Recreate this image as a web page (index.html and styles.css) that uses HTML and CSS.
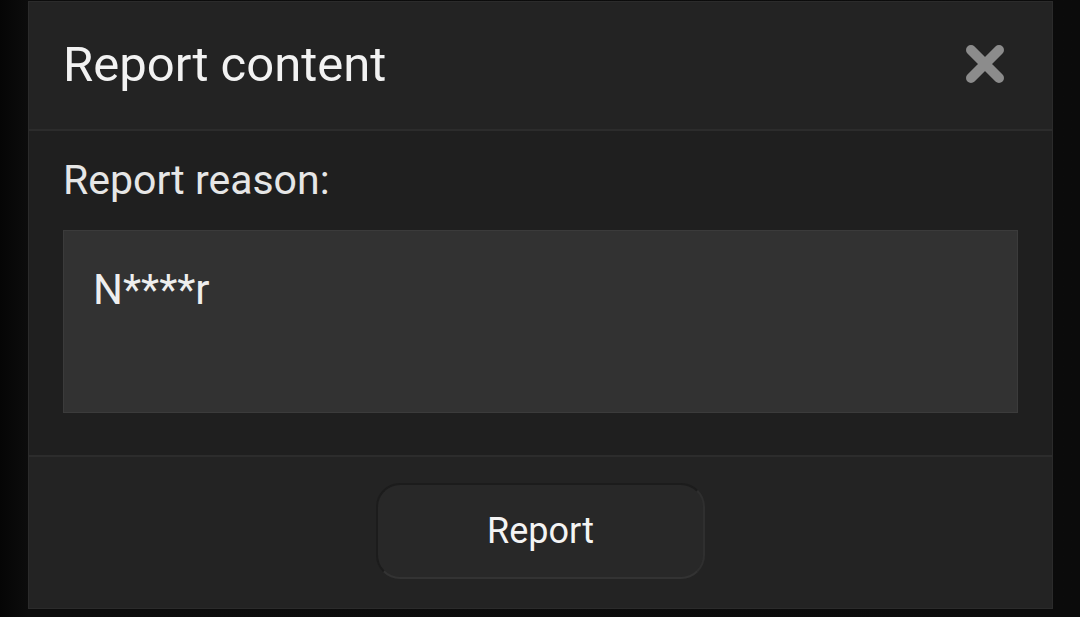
FILE: index.html
```html
<!DOCTYPE html>
<html lang="en">
<head>
<meta charset="utf-8">
<title>Report content</title>
<link rel="stylesheet" href="styles.css">
</head>
<body>
<div class="backdrop">
  <div class="dialog" role="dialog" aria-labelledby="dlg-title">
    <header class="dialog-header">
      <h1 id="dlg-title" class="dialog-title">Report content</h1>
      <button class="close-btn" aria-label="Close">
        <svg width="38" height="38" viewBox="0 0 38 38" aria-hidden="true">
          <path d="M5 5 L33 33 M33 5 L5 33" stroke="#8c8c8c" stroke-width="10" stroke-linecap="round" fill="none"/>
        </svg>
      </button>
    </header>
    <section class="dialog-body">
      <label class="field-label" for="reason">Report reason:</label>
      <div class="reason-box" id="reason">N****r</div>
    </section>
    <footer class="dialog-footer">
      <button class="report-btn">Report</button>
    </footer>
  </div>
</div>
</body>
</html>
```

FILE: styles.css
```css
html, body {
  margin: 0;
  padding: 0;
  height: 100%;
}

body {
  background: #0b0b0b;
  font-family: Roboto, "Noto Sans", sans-serif;
  color: #f0f0f0;
}

.backdrop {
  height: 617px;
  display: flex;
  padding: 1px 0 0 28px;
  box-sizing: border-box;
  background: linear-gradient(to right, #050505 0, #0c0c0c 28px, #0b0b0b 100%);
}

.dialog {
  width: 1025px;
  height: 608px;
  box-sizing: border-box;
  border: 1px solid #2b2b2b;
  display: flex;
  flex-direction: column;
  background: #1f1f1f;
}

.dialog-header {
  height: 129px;
  flex: none;
  box-sizing: border-box;
  background: #232323;
  border-bottom: 2px solid #2c2c2c;
  display: flex;
  align-items: center;
  justify-content: space-between;
  padding: 0 48px 0 34px;
}

.dialog-title {
  margin: 0;
  font-size: 49px;
  font-weight: 400;
  color: #f2f2f2;
  padding-bottom: 3px;
}

.close-btn {
  background: none;
  border: 0;
  padding: 0 0 3px 0;
  display: flex;
  cursor: pointer;
}

.dialog-body {
  flex: none;
  height: 326px;
  box-sizing: border-box;
  padding: 26px 34px 0 34px;
  border-bottom: 2px solid #2c2c2c;
  display: flex;
  flex-direction: column;
}

.field-label {
  font-size: 41px;
  color: #e6e6e6;
  line-height: 47px;
  margin-bottom: 26px;
}

.reason-box {
  height: 183px;
  box-sizing: border-box;
  background: #323232;
  border: 1px solid #3b3b3b;
  padding: 36px 29px;
  font-size: 42px;
  line-height: 46px;
  color: #eeeeee;
}

.dialog-footer {
  flex: 1;
  background: #232323;
  display: flex;
  justify-content: center;
  padding-top: 26px;
}

.report-btn {
  width: 329px;
  height: 96px;
  box-sizing: border-box;
  border-radius: 24px;
  background: #282828;
  border: 2px solid #1c1c1c;
  border-bottom-color: #333333;
  border-right-color: #2f2f2f;
  color: #f4f4f4;
  font-family: Roboto, "Noto Sans", sans-serif;
  font-size: 36px;
  padding-bottom: 2px;
  cursor: pointer;
}
```
